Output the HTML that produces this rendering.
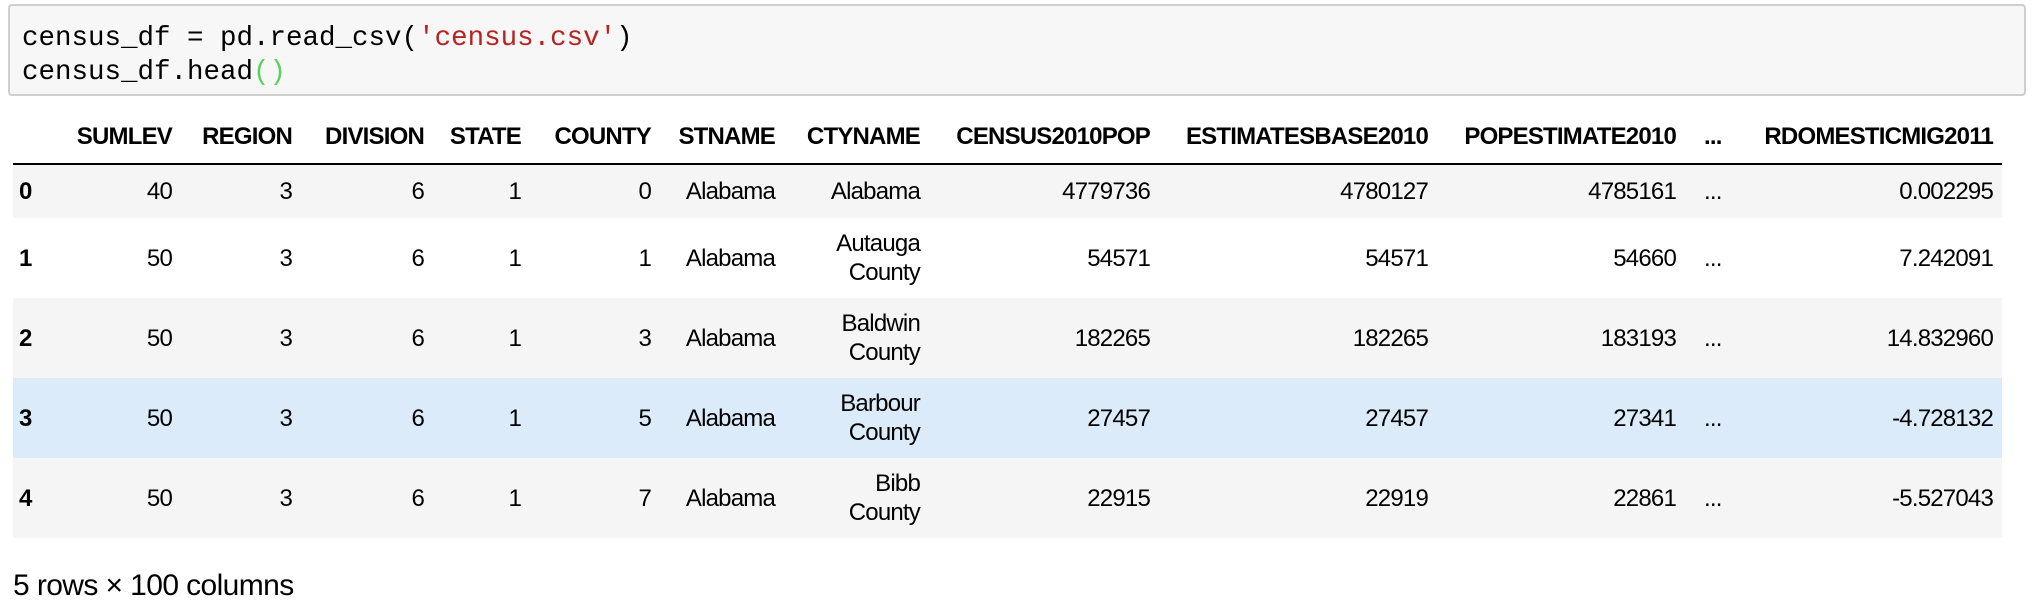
<!DOCTYPE html>
<html><head><meta charset="utf-8">
<style>
html,body{margin:0;padding:0;background:#fff;width:2032px;height:616px;overflow:hidden;position:relative}
.code{position:absolute;left:8px;top:4px;width:2014px;height:88px;background:#f7f7f7;border:2px solid #cfcfcf;border-radius:4px;box-sizing:content-box}
.code pre{margin:0;position:absolute;left:12px;top:16px;font-family:"Liberation Mono",monospace;font-size:27.5px;line-height:34px;color:#000}
.s{color:#ba2121}.g{color:#5bd35b}
table{position:absolute;left:13px;top:110px;border-collapse:collapse;table-layout:fixed;width:1989px;font-family:"Liberation Sans",sans-serif;font-size:24px;letter-spacing:-0.8px;color:#000}
td,th{padding:0;text-align:right;white-space:nowrap;line-height:29px;vertical-align:middle}
thead th{height:53px;border-bottom:2px solid #000;font-weight:bold}
tbody tr.a{height:54px}
tbody tr.b{height:80px}
tr.g1{background:#f5f5f5}
tr.bl{background:#dcebfa}
td.i{text-align:left;padding-left:6px;font-weight:bold}
.e{text-align:left;padding-left:28px}
.foot{position:absolute;left:13px;top:569px;font-family:"Liberation Sans",sans-serif;font-size:30px;letter-spacing:-0.6px}
</style></head><body>
<div class="code"><pre>census_df = pd.read_csv(<span class="s">'census.csv'</span>)
census_df.head<span class="g">()</span></pre></div>
<table>
<colgroup><col style="width:47px"><col style="width:112px"><col style="width:120px"><col style="width:132px"><col style="width:97px"><col style="width:130px"><col style="width:124px"><col style="width:145px"><col style="width:230px"><col style="width:278px"><col style="width:248px"><col style="width:48px"><col style="width:278px"></colgroup>
<thead><tr><th></th><th>SUMLEV</th><th>REGION</th><th>DIVISION</th><th>STATE</th><th>COUNTY</th><th>STNAME</th><th>CTYNAME</th><th>CENSUS2010POP</th><th>ESTIMATESBASE2010</th><th>POPESTIMATE2010</th><th class="e">...</th><th style="padding-right:9px">RDOMESTICMIG2011</th></tr></thead>
<tbody>
<tr class="a g1"><td class="i">0</td><td>40</td><td>3</td><td>6</td><td>1</td><td>0</td><td>Alabama</td><td>Alabama</td><td>4779736</td><td>4780127</td><td>4785161</td><td class="e">...</td><td style="padding-right:9px">0.002295</td></tr>
<tr class="b"><td class="i">1</td><td>50</td><td>3</td><td>6</td><td>1</td><td>1</td><td>Alabama</td><td>Autauga<br>County</td><td>54571</td><td>54571</td><td>54660</td><td class="e">...</td><td style="padding-right:9px">7.242091</td></tr>
<tr class="b g1"><td class="i">2</td><td>50</td><td>3</td><td>6</td><td>1</td><td>3</td><td>Alabama</td><td>Baldwin<br>County</td><td>182265</td><td>182265</td><td>183193</td><td class="e">...</td><td style="padding-right:9px">14.832960</td></tr>
<tr class="b bl"><td class="i">3</td><td>50</td><td>3</td><td>6</td><td>1</td><td>5</td><td>Alabama</td><td>Barbour<br>County</td><td>27457</td><td>27457</td><td>27341</td><td class="e">...</td><td style="padding-right:9px">-4.728132</td></tr>
<tr class="b g1"><td class="i">4</td><td>50</td><td>3</td><td>6</td><td>1</td><td>7</td><td>Alabama</td><td>Bibb<br>County</td><td>22915</td><td>22919</td><td>22861</td><td class="e">...</td><td style="padding-right:9px">-5.527043</td></tr>
</tbody></table>
<div class="foot">5 rows × 100 columns</div>
</body></html>
